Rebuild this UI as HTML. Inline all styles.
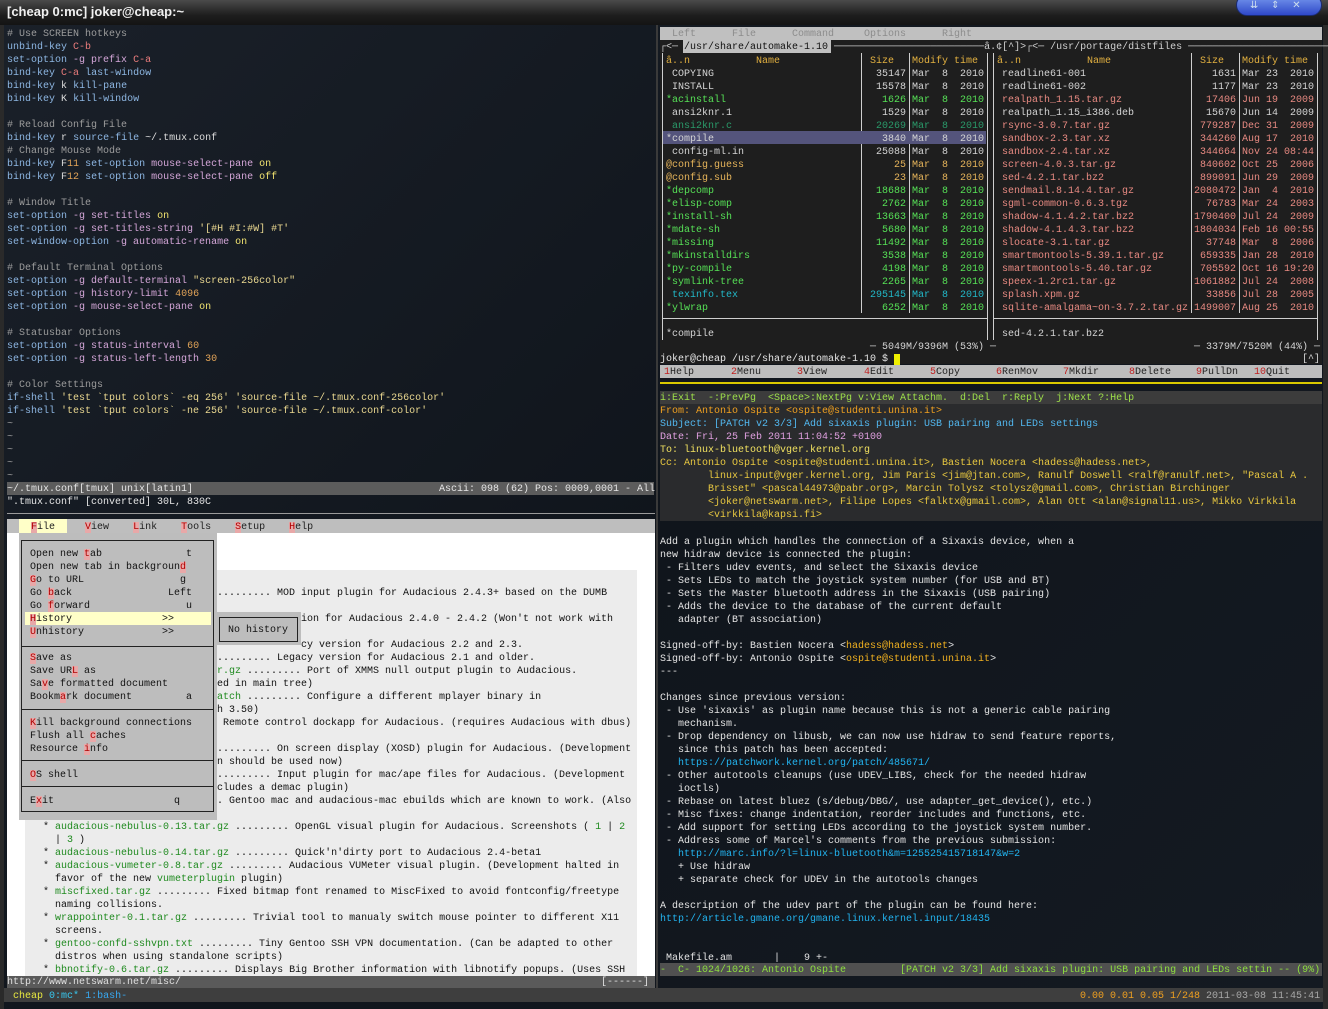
<!DOCTYPE html>
<html><head><meta charset="utf-8">
<style>
*{margin:0;padding:0;box-sizing:border-box}
html,body{width:1328px;height:1009px;overflow:hidden;background:#0b0d10}
body{position:relative;font-family:"Liberation Mono","DejaVu Sans Mono",monospace;font-size:10px;line-height:13px;color:#d4d4d4}
.abs{position:absolute}
pre{font-family:inherit;font-size:10px;line-height:13px;white-space:pre;margin:2px 0 0 0}
.c{color:#9c9c9c}.k{color:#8db6e2}.a{color:#d4a6d8}.r{color:#ea7c7c}.y{color:#f2e470}.n{color:#e2a458}.s{color:#ead890}.w{color:#dcdcdc}
.g{color:#56e056}.o{color:#e6b45a}.cy{color:#22b8c8}.dg{color:#2a9a6a}.sa{color:#e88a82}.hd{color:#e2b040}
.lg{color:#1f8a1f}
.u{background:#e8a8a8;color:#b00000}
</style></head><body>

<div class="abs" style="left:0;top:0;width:1328px;height:25px;background:linear-gradient(#4a4a4a,#1e1e1e 60%,#141414)"></div>
<div class="abs" style="left:7px;top:4px;font-family:'Liberation Sans',sans-serif;font-weight:bold;font-size:13px;line-height:16px;color:#f0f0f0">[cheap 0:mc] joker@cheap:~</div>
<div class="abs" style="left:1236px;top:-6px;width:86px;height:22px;border-radius:11px;background:linear-gradient(#7a9cf0,#2e48c8);border:1px solid #1a2a70"></div>
<div class="abs" style="left:1250px;top:0px;font-family:'DejaVu Sans',sans-serif;font-size:10px;color:#cde;line-height:12px">⇊&nbsp;&nbsp;&nbsp;&nbsp;⇕&nbsp;&nbsp;&nbsp;&nbsp;✕</div>

<div class="abs" style="left:0;top:25px;width:1328px;height:984px;background:linear-gradient(135deg,#1a2029,#10151c 50%,#141a22)"></div>
<div class="abs" style="left:0;top:25px;width:4px;height:984px;background:#2a2a2a"></div>
<div class="abs" style="left:1323px;top:25px;width:5px;height:984px;background:#2a2a2a"></div>

<pre class="abs" style="left:7px;top:26px"><span class="c"># Use SCREEN hotkeys</span>
<span class="k">unbind-key</span> <span class="r">C-b</span>
<span class="k">set-option</span> <span class="a">-g prefix</span> <span class="r">C-a</span>
<span class="k">bind-key</span> <span class="r">C-a</span> <span class="k">last-window</span>
<span class="k">bind-key</span> <span class="w">k</span> <span class="k">kill-pane</span>
<span class="k">bind-key</span> <span class="w">K</span> <span class="k">kill-window</span>

<span class="c"># Reload Config File</span>
<span class="k">bind-key</span> <span class="w">r</span> <span class="k">source-file</span> <span class="w">~/.tmux.conf</span>
<span class="c"># Change Mouse Mode</span>
<span class="k">bind-key</span> <span class="w">F</span><span class="n">11</span> <span class="k">set-option</span> <span class="a">mouse-select-pane</span> <span class="y">on</span>
<span class="k">bind-key</span> <span class="w">F</span><span class="n">12</span> <span class="k">set-option</span> <span class="a">mouse-select-pane</span> <span class="y">off</span>

<span class="c"># Window Title</span>
<span class="k">set-option</span> <span class="a">-g set-titles</span> <span class="y">on</span>
<span class="k">set-option</span> <span class="a">-g set-titles-string</span> <span class="s">'[#H #I:#W] #T'</span>
<span class="k">set-window-option</span> <span class="a">-g automatic-rename</span> <span class="y">on</span>

<span class="c"># Default Terminal Options</span>
<span class="k">set-option</span> <span class="a">-g default-terminal</span> <span class="s">"screen-256color"</span>
<span class="k">set-option</span> <span class="a">-g history-limit</span> <span class="n">4096</span>
<span class="k">set-option</span> <span class="a">-g mouse-select-pane</span> <span class="y">on</span>

<span class="c"># Statusbar Options</span>
<span class="k">set-option</span> <span class="a">-g status-interval</span> <span class="n">60</span>
<span class="k">set-option</span> <span class="a">-g status-left-length</span> <span class="n">30</span>

<span class="c"># Color Settings</span>
<span class="k">if-shell</span> <span class="s">'test `tput colors` -eq 256'</span> <span class="s">'source-file ~/.tmux.conf-256color'</span>
<span class="k">if-shell</span> <span class="s">'test `tput colors` -ne 256'</span> <span class="s">'source-file ~/.tmux.conf-color'</span>
<span class="c">~</span>
<span class="c">~</span>
<span class="c">~</span>
<span class="c">~</span>
<span class="c">~</span></pre>
<div class="abs" style="left:7px;top:482px;width:647px;height:13px;background:#5c5c5c"></div>
<pre class="abs" style="left:7px;top:481px;color:#e6e6e6">~/.tmux.conf[tmux] unix[latin1]</pre>
<pre class="abs" style="left:439px;top:481px;color:#e6e6e6">Ascii: 098 (62) Pos: 0009,0001 - All</pre>
<pre class="abs" style="left:7px;top:494px;color:#e6e6e6">".tmux.conf" [converted] 30L, 830C</pre>
<div class="abs" style="left:7px;top:513px;width:648px;height:1px;background:#9a9a9a"></div>

<div class="abs" style="left:656px;top:25px;width:2px;height:963px;background:#3a3a3a"></div>

<div class="abs" style="left:7px;top:519px;width:648px;height:457px;background:#fff"></div>
<div class="abs" style="left:25px;top:570px;width:612px;height:406px;background:#ececec"></div>
<div class="abs" style="left:7px;top:519px;width:648px;height:14px;background:#bebebe"></div>
<div class="abs" style="left:19px;top:519px;width:48px;height:14px;background:#ffffc8"></div>
<pre class="abs" style="left:31px;top:519px;color:#222"><span class="u">F</span>ile     <span class="u">V</span>iew    <span class="u">L</span>ink    <span class="u">T</span>ools    <span class="u">S</span>etup    <span class="u">H</span>elp</pre>

<pre class="abs" style="left:217px;top:585px;color:#111">......... MOD input plugin for Audacious 2.4.3+ based on the DUMB




......... Legacy version for Audacious 2.1 and older.
<span class="lg">r.gz</span> ......... Port of XMMS null output plugin to Audacious.
ed in main tree)
<span class="lg">atch</span> ......... Configure a different mplayer binary in
h 3.50)
 Remote control dockapp for Audacious. (requires Audacious with dbus)

......... On screen display (XOSD) plugin for Audacious. (Development
n should be used now)
......... Input plugin for mac/ape files for Audacious. (Development
cludes a demac plugin)
. Gentoo mac and audacious-mac ebuilds which are known to work. (Also</pre>
<pre class="abs" style="left:301px;top:611px;color:#111">ion for Audacious 2.4.0 - 2.4.2 (Won't not work with

cy version for Audacious 2.2 and 2.3.</pre>
<pre class="abs" style="left:43px;top:819px;color:#111">* <span class="lg">audacious-nebulus-0.13.tar.gz</span> ......... OpenGL visual plugin for Audacious. Screenshots ( <span class="lg">1</span> | <span class="lg">2</span>
  | <span class="lg">3</span> )
* <span class="lg">audacious-nebulus-0.14.tar.gz</span> ......... Quick'n'dirty port to Audacious 2.4-beta1
* <span class="lg">audacious-vumeter-0.8.tar.gz</span> ......... Audacious VUMeter visual plugin. (Development halted in
  favor of the new <span class="lg">vumeterplugin</span> plugin)
* <span class="lg">miscfixed.tar.gz</span> ......... Fixed bitmap font renamed to MiscFixed to avoid fontconfig/freetype
  naming collisions.
* <span class="lg">wrappointer-0.1.tar.gz</span> ......... Trivial tool to manualy switch mouse pointer to different X11
  screens.
* <span class="lg">gentoo-confd-sshvpn.txt</span> ......... Tiny Gentoo SSH VPN documentation. (Can be adapted to other
  distros when using standalone scripts)
* <span class="lg">bbnotify-0.6.tar.gz</span> ......... Displays Big Brother information with libnotify popups. (Uses SSH</pre>

<div class="abs" style="left:19px;top:533px;width:198px;height:287px;background:#bdbdbd"></div>
<div class="abs" style="left:21px;top:540px;width:193px;height:272px;border:1px solid #222"></div>
<div class="abs" style="left:21px;top:646px;width:193px;height:1px;background:#222"></div>
<div class="abs" style="left:21px;top:709px;width:193px;height:1px;background:#222"></div>
<div class="abs" style="left:21px;top:760px;width:193px;height:1px;background:#222"></div>
<div class="abs" style="left:21px;top:786px;width:193px;height:1px;background:#222"></div>
<div class="abs" style="left:25px;top:612px;width:186px;height:13px;background:#ffffc8"></div>
<pre class="abs" style="left:30px;top:546px;color:#111">Open new <span class="u">t</span>ab              t
Open new tab in backgroun<span class="u">d</span>
<span class="u">G</span>o to URL                g
Go <span class="u">b</span>ack                Left
Go <span class="u">f</span>orward                u
<span class="u">H</span>istory               &gt;&gt;
<span class="u">U</span>nhistory             &gt;&gt;

<span class="u">S</span>ave as
Save UR<span class="u">L</span> as
Sa<span class="u">v</span>e formatted document
Bookm<span class="u">a</span>rk document         a

<span class="u">K</span>ill background connections
Flush all <span class="u">c</span>aches
Resource <span class="u">i</span>nfo

<span class="u">O</span>S shell

E<span class="u">x</span>it                    q</pre>
<div class="abs" style="left:216px;top:612px;width:85px;height:33px;background:#bdbdbd"></div>
<div class="abs" style="left:219px;top:617px;width:79px;height:25px;border:1px solid #222"></div>
<pre class="abs" style="left:228px;top:622px;color:#111">No history</pre>

<div class="abs" style="left:7px;top:976px;width:648px;height:13px;background:#5a5a5a"></div>
<pre class="abs" style="left:7px;top:974px;color:#e0e0e0">http://www.netswarm.net/misc/</pre>
<pre class="abs" style="left:601px;top:974px;color:#e0e0e0">[------]</pre>

<div class="abs" style="left:660px;top:40px;width:662px;height:324px;background:#1e1e1e"></div>
<div class="abs" style="left:660px;top:27px;width:662px;height:13px;background:#c0c0c0"></div>
<pre class="abs" style="left:672px;top:26px;color:#8c8c8c">Left      File      Command     Options      Right</pre>
<div class="abs" style="left:683px;top:40px;width:148px;height:13px;background:#c0c0c0"></div>
<pre class="abs" style="left:660px;top:39px;color:#d0d0d0">┌&lt;─<span style="color:#111"> /usr/share/automake-1.10 </span>─────────────────────────â.¢[^]&gt;┌&lt;─ /usr/portage/distfiles ──────────────────────────â.¢[^]┐</pre>
<div class="abs" style="left:662px;top:53px;width:1px;height:287px;background:#cfcfcf"></div>
<div class="abs" style="left:987px;top:53px;width:1px;height:287px;background:#cfcfcf"></div>
<div class="abs" style="left:993px;top:53px;width:1px;height:287px;background:#cfcfcf"></div>
<div class="abs" style="left:1317px;top:53px;width:1px;height:287px;background:#cfcfcf"></div>
<div class="abs" style="left:861px;top:53px;width:1px;height:260px;background:#cfcfcf"></div>
<div class="abs" style="left:909px;top:53px;width:1px;height:260px;background:#cfcfcf"></div>
<div class="abs" style="left:1191px;top:53px;width:1px;height:260px;background:#cfcfcf"></div>
<div class="abs" style="left:1239px;top:53px;width:1px;height:260px;background:#cfcfcf"></div>
<div class="abs" style="left:662px;top:318px;width:326px;height:1px;background:#cfcfcf"></div>
<div class="abs" style="left:993px;top:318px;width:325px;height:1px;background:#cfcfcf"></div>
<div class="abs" style="left:663px;top:131px;width:323px;height:13px;background:#54547c"></div>
<pre class="abs hd" style="left:666px;top:53px">â..n           Name</pre>
<pre class="abs hd" style="left:870px;top:53px">Size</pre>
<pre class="abs hd" style="left:912px;top:53px">Modify time</pre>
<pre class="abs hd" style="left:997px;top:53px">â..n           Name</pre>
<pre class="abs hd" style="left:1200px;top:53px">Size</pre>
<pre class="abs hd" style="left:1242px;top:53px">Modify time</pre>
<pre class="abs" style="left:666px;top:66px"> COPYING
 INSTALL
<span class="g">*acinstall</span>
 ansi2knr.1
<span class="dg"> ansi2knr.c</span>
*compile
 config-ml.in
<span class="o">@config.guess</span>
<span class="o">@config.sub</span>
<span class="g">*depcomp
*elisp-comp
*install-sh
*mdate-sh
*missing
*mkinstalldirs
*py-compile
*symlink-tree</span>
<span class="cy"> texinfo.tex</span>
<span class="g">*ylwrap</span></pre>
<pre class="abs" style="left:864px;top:66px;text-align:right;width:42px">35147
15578
<span class="g">1626</span>
1529
<span class="dg">20269</span>
3840
25088
<span class="o">25</span>
<span class="o">23</span>
<span class="g">18688
2762
13663
5680
11492
3538
4198
2265</span>
<span class="cy">295145</span>
<span class="g">6252</span></pre>
<pre class="abs" style="left:912px;top:66px">Mar  8  2010
Mar  8  2010
<span class="g">Mar  8  2010</span>
Mar  8  2010
<span class="dg">Mar  8  2010</span>
Mar  8  2010
Mar  8  2010
<span class="o">Mar  8  2010
Mar  8  2010</span>
<span class="g">Mar  8  2010
Mar  8  2010
Mar  8  2010
Mar  8  2010
Mar  8  2010
Mar  8  2010
Mar  8  2010
Mar  8  2010</span>
<span class="cy">Mar  8  2010</span>
<span class="g">Mar  8  2010</span></pre>
<pre class="abs" style="left:1002px;top:66px">readline61-001
readline61-002
<span class="sa">realpath_1.15.tar.gz</span>
realpath_1.15_i386.deb
<span class="sa">rsync-3.0.7.tar.gz
sandbox-2.3.tar.xz
sandbox-2.4.tar.xz
screen-4.0.3.tar.gz
sed-4.2.1.tar.bz2
sendmail.8.14.4.tar.gz
sgml-common-0.6.3.tgz
shadow-4.1.4.2.tar.bz2
shadow-4.1.4.3.tar.bz2
slocate-3.1.tar.gz
smartmontools-5.39.1.tar.gz
smartmontools-5.40.tar.gz
speex-1.2rc1.tar.gz
splash.xpm.gz
sqlite-amalgama~on-3.7.2.tar.gz</span></pre>
<pre class="abs" style="left:1192px;top:66px;text-align:right;width:44px">1631
1177
<span class="sa">17406</span>
15670
<span class="sa">779287
344260
344664
840602
899091
2080472
76783
1790400
1804034
37748
659335
705592
1061882
33856
1499007</span></pre>
<pre class="abs" style="left:1242px;top:66px">Mar 23  2010
Mar 23  2010
<span class="sa">Jun 19  2009</span>
Jun 14  2009
<span class="sa">Dec 31  2009
Aug 17  2010
Nov 24 08:44
Oct 25  2006
Jun 29  2009
Jan  4  2010
Mar 24  2003
Jul 24  2009
Feb 16 00:55
Mar  8  2006
Jan 28  2010
Oct 16 19:20
Jul 24  2008
Jul 28  2005
Aug 25  2010</span></pre>
<pre class="abs" style="left:666px;top:326px">*compile</pre>
<pre class="abs" style="left:1002px;top:326px">sed-4.2.1.tar.bz2</pre>
<pre class="abs" style="left:870px;top:339px">─ 5049M/9396M (53%) ─</pre>
<pre class="abs" style="left:1194px;top:339px">─ 3379M/7520M (44%) ─</pre>
<pre class="abs" style="left:660px;top:351px;color:#e6e6e6">joker@cheap /usr/share/automake-1.10 $ <span style="background:#f0f000"> </span></pre>
<pre class="abs" style="left:1302px;top:351px">[^]</pre>
<div class="abs" style="left:660px;top:365px;width:662px;height:13px;background:#bdbdbd"></div>
<pre class="abs" style="left:664px;top:364px;color:#222"><span style="color:#c02020">1</span>Help</pre>
<pre class="abs" style="left:731px;top:364px;color:#222"><span style="color:#c02020">2</span>Menu</pre>
<pre class="abs" style="left:797px;top:364px;color:#222"><span style="color:#c02020">3</span>View</pre>
<pre class="abs" style="left:864px;top:364px;color:#222"><span style="color:#c02020">4</span>Edit</pre>
<pre class="abs" style="left:930px;top:364px;color:#222"><span style="color:#c02020">5</span>Copy</pre>
<pre class="abs" style="left:996px;top:364px;color:#222"><span style="color:#c02020">6</span>RenMov</pre>
<pre class="abs" style="left:1063px;top:364px;color:#222"><span style="color:#c02020">7</span>Mkdir</pre>
<pre class="abs" style="left:1129px;top:364px;color:#222"><span style="color:#c02020">8</span>Delete</pre>
<pre class="abs" style="left:1196px;top:364px;color:#222"><span style="color:#c02020">9</span>PullDn</pre>
<pre class="abs" style="left:1254px;top:364px;color:#222"><span style="color:#c02020">10</span>Quit</pre>

<div class="abs" style="left:660px;top:382px;width:662px;height:2px;background:#d8c800"></div>
<div class="abs" style="left:660px;top:391px;width:662px;height:13px;background:#3c3c3c"></div>
<div class="abs" style="left:660px;top:404px;width:662px;height:117px;background:#2a2b2d"></div>
<pre class="abs" style="left:660px;top:390px;color:#9ee04a">i:Exit  -:PrevPg  &lt;Space&gt;:NextPg v:View Attachm.  d:Del  r:Reply  j:Next ?:Help</pre>
<pre class="abs" style="left:660px;top:403px;color:#e8c840"><span style="color:#f0a020">From: Antonio Ospite &lt;ospite@studenti.unina.it&gt;</span>
<span style="color:#52b8f0">Subject: [PATCH v2 3/3] Add sixaxis plugin: USB pairing and LEDs settings</span>
<span style="color:#e0a0e0">Date: Fri, 25 Feb 2011 11:04:52 +0100</span>
<span style="color:#f0e060">To: linux-bluetooth@vger.kernel.org</span>
Cc: Antonio Ospite &lt;ospite@studenti.unina.it&gt;, Bastien Nocera &lt;hadess@hadess.net&gt;,
        linux-input@vger.kernel.org, Jim Paris &lt;jim@jtan.com&gt;, Ranulf Doswell &lt;ralf@ranulf.net&gt;, "Pascal A .
        Brisset" &lt;pascal44973@pabr.org&gt;, Marcin Tolysz &lt;tolysz@gmail.com&gt;, Christian Birchinger
        &lt;joker@netswarm.net&gt;, Filipe Lopes &lt;falktx@gmail.com&gt;, Alan Ott &lt;alan@signal11.us&gt;, Mikko Virkkila
        &lt;virkkila@kapsi.fi&gt;</pre>
<pre class="abs" style="left:660px;top:534px;color:#e4e4e4">Add a plugin which handles the connection of a Sixaxis device, when a
new hidraw device is connected the plugin:
 - Filters udev events, and select the Sixaxis device
 - Sets LEDs to match the joystick system number (for USB and BT)
 - Sets the Master bluetooth address in the Sixaxis (USB pairing)
 - Adds the device to the database of the current default
   adapter (BT association)

Signed-off-by: Bastien Nocera &lt;<span style="color:#f0b020">hadess@hadess.net</span>&gt;
Signed-off-by: Antonio Ospite &lt;<span style="color:#f0b020">ospite@studenti.unina.it</span>&gt;
---

Changes since previous version:
 - Use 'sixaxis' as plugin name because this is not a generic cable pairing
   mechanism.
 - Drop dependency on libusb, we can now use hidraw to send feature reports,
   since this patch has been accepted:
   <span style="color:#22b4f0">https://patchwork.kernel.org/patch/485671/</span>
 - Other autotools cleanups (use UDEV_LIBS, check for the needed hidraw
   ioctls)
 - Rebase on latest bluez (s/debug/DBG/, use adapter_get_device(), etc.)
 - Misc fixes: change indentation, reorder includes and functions, etc.
 - Add support for setting LEDs according to the joystick system number.
 - Address some of Marcel's comments from the previous submission:
   <span style="color:#22b4f0">http://marc.info/?l=linux-bluetooth&amp;m=125525415718147&amp;w=2</span>
   + Use hidraw
   + separate check for UDEV in the autotools changes

A description of the udev part of the plugin can be found here:
<span style="color:#22b4f0">http://article.gmane.org/gmane.linux.kernel.input/18435</span>


 Makefile.am       |    9 +-</pre>
<div class="abs" style="left:660px;top:963px;width:662px;height:13px;background:#505050"></div>
<pre class="abs" style="left:660px;top:962px;color:#8ee040">-  C- 1024/1026: Antonio Ospite         [PATCH v2 3/3] Add sixaxis plugin: USB pairing and LEDs settin -- (9%)</pre>

<div class="abs" style="left:4px;top:988px;width:1319px;height:14px;background:#3e3e3e"></div>
<pre class="abs" style="left:13px;top:988px"><span style="color:#e8e840">cheap</span> <span style="color:#38c8f0">0:mc*</span> <span style="color:#38a8f0">1:bash-</span></pre>
<pre class="abs" style="left:1080px;top:988px"><span style="color:#f0a020">0.00 0.01 0.05 1/248</span> <span style="color:#a8a8a8">2011-03-08 11:45:41</span></pre>
</body></html>
